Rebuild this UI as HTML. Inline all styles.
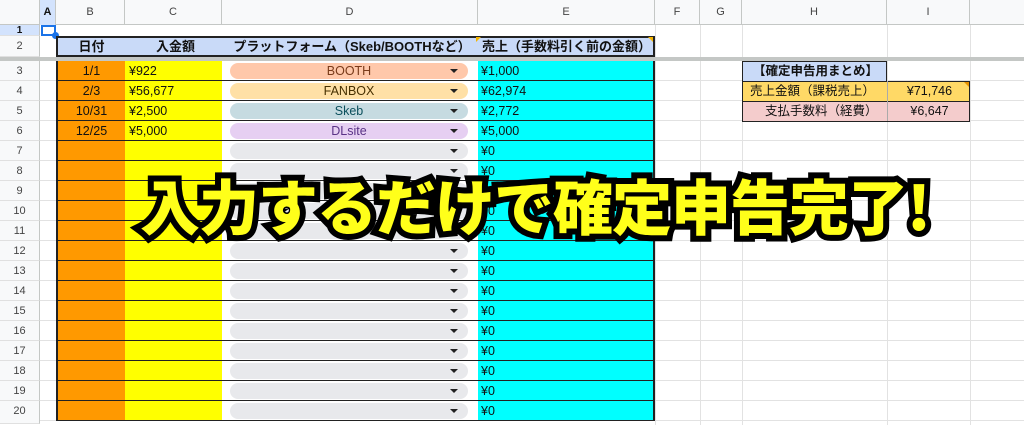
<!DOCTYPE html><html><head><meta charset="utf-8"><style>
*{margin:0;padding:0;box-sizing:border-box}
body{width:1024px;height:424px;overflow:hidden;background:#fff;font-family:"Liberation Sans","Noto Sans CJK JP",sans-serif;font-size:12.5px;color:#111;position:relative}
.a{position:absolute}
.hdr{top:0;height:25px;background:#f8f9fa;border-bottom:1px solid #c4c7c5;left:0;width:1024px}
.ch{position:absolute;top:0;height:25px;line-height:25px;text-align:center;color:#444;font-size:11px;border-right:1px solid #c4c7c5}
.rh{position:absolute;left:0;width:40px;background:#f8f9fa;border-right:1px solid #c4c7c5;border-bottom:1px solid #e0e0e0;text-align:center;color:#444;font-size:11px}
.r{position:absolute;left:40px;width:984px;height:20px;border-bottom:1px solid #e2e2e2}
.c{position:absolute;top:0;height:20px;line-height:21px}
.B{left:16px;width:69px;background:#ff9900;text-align:center;border-left:2px solid #222}
.C{left:85px;width:97px;background:#ffff00;padding-left:4px}
.D{left:182px;width:256px}
.E{left:438px;width:177px;background:#00ffff;padding-left:3px;border-right:2px solid #222}
.ln{position:absolute;left:16px;width:599px;height:1px;background:#222;top:19px}
.p{position:absolute;left:8px;top:2px;width:238px;height:16px;border-radius:8px;background:#e8e9ec;text-align:center;line-height:17px;font-size:12.5px}
.p:after{content:"";position:absolute;right:10px;top:6px;border-left:4px solid transparent;border-right:4px solid transparent;border-top:4px solid #222}
.vl{position:absolute;top:25px;width:1px;height:400px;background:#e2e2e2}
.big{position:absolute;left:140px;top:172px;font-size:60px;font-weight:900;color:#ffff1a;white-space:nowrap;letter-spacing:-1px;font-family:"Noto Sans CJK JP",sans-serif;-webkit-text-stroke:12px #000;paint-order:stroke fill;line-height:1.1}
</style></head><body>
<div class="a hdr"></div>
<div class="ch" style="left:0;width:40px"></div>
<div class="ch" style="left:40px;width:16px;background:#d3e3fd;font-weight:bold;color:#111">A</div>
<div class="ch" style="left:56px;width:69px">B</div>
<div class="ch" style="left:125px;width:97px">C</div>
<div class="ch" style="left:222px;width:256px">D</div>
<div class="ch" style="left:478px;width:177px">E</div>
<div class="ch" style="left:655px;width:45px">F</div>
<div class="ch" style="left:700px;width:42px">G</div>
<div class="ch" style="left:742px;width:145px">H</div>
<div class="ch" style="left:887px;width:83px">I</div>
<div class="vl" style="left:655px"></div><div class="vl" style="left:700px"></div><div class="vl" style="left:742px"></div><div class="vl" style="left:887px"></div><div class="vl" style="left:970px"></div>
<div class="rh" style="top:25px;height:11px;line-height:11px;background:#d3e3fd;font-weight:bold;color:#111;font-size:10px">1</div>
<div class="rh" style="top:36px;height:21px;line-height:21px">2</div>
<div class="a" style="left:41px;top:25px;width:15px;height:11px;border:2px solid #1a73e8"></div>
<div class="a" style="left:52px;top:32px;width:7px;height:7px;border-radius:50%;background:#1a73e8"></div>
<div class="a" style="left:56px;top:36px;width:599px;height:21px;background:#c9daf8;border:2px solid #222;font-weight:bold;font-size:13px;line-height:18px">
<span class="a" style="left:0;width:67px;text-align:center">日付</span>
<span class="a" style="left:69px;width:97px;text-align:center">入金額</span>
<span class="a" style="left:166px;width:256px;text-align:center">プラットフォーム（Skeb/BOOTHなど）</span>
<span class="a" style="left:424px">売上（手数料引く前の金額）</span>
<span class="a" style="left:418px;top:-1px;border-top:5px solid #f4b400;border-right:5px solid transparent"></span>
<span class="a" style="right:0;top:-1px;border-top:5px solid #f4b400;border-left:5px solid transparent"></span>
</div>
<div class="a" style="left:0;top:57px;width:1024px;height:4px;background:#c4c7c5"></div>

<div class="rh" style="top:61px;height:20px;line-height:20px">3</div>
<div class="r" style="top:61px"><div class="c B">1/1</div><div class="c C">¥922</div><div class="c D"><div class="p" style="background:#ffc8aa;color:#7a3b1a">BOOTH</div></div><div class="c E">¥1,000</div><div class="ln"></div></div>
<div class="rh" style="top:81px;height:20px;line-height:20px">4</div>
<div class="r" style="top:81px"><div class="c B">2/3</div><div class="c C">¥56,677</div><div class="c D"><div class="p" style="background:#ffe0a6;color:#473000">FANBOX</div></div><div class="c E">¥62,974</div><div class="ln"></div></div>
<div class="rh" style="top:101px;height:20px;line-height:20px">5</div>
<div class="r" style="top:101px"><div class="c B">10/31</div><div class="c C">¥2,500</div><div class="c D"><div class="p" style="background:#c6dbe1;color:#0b4f5c">Skeb</div></div><div class="c E">¥2,772</div><div class="ln"></div></div>
<div class="rh" style="top:121px;height:20px;line-height:20px">6</div>
<div class="r" style="top:121px"><div class="c B">12/25</div><div class="c C">¥5,000</div><div class="c D"><div class="p" style="background:#e6cff2;color:#5a3286">DLsite</div></div><div class="c E">¥5,000</div><div class="ln"></div></div>

<div class="rh" style="top:141px;height:20px;line-height:20px">7</div><div class="r" style="top:141px"><div class="c B"></div><div class="c C"></div><div class="c D"><div class="p"></div></div><div class="c E">¥0</div><div class="ln"></div></div>
<div class="rh" style="top:161px;height:20px;line-height:20px">8</div><div class="r" style="top:161px"><div class="c B"></div><div class="c C"></div><div class="c D"><div class="p"></div></div><div class="c E">¥0</div><div class="ln"></div></div>
<div class="rh" style="top:181px;height:20px;line-height:20px">9</div><div class="r" style="top:181px"><div class="c B"></div><div class="c C"></div><div class="c D"><div class="p"></div></div><div class="c E">¥0</div><div class="ln"></div></div>
<div class="rh" style="top:201px;height:20px;line-height:20px">10</div><div class="r" style="top:201px"><div class="c B"></div><div class="c C"></div><div class="c D"><div class="p"></div></div><div class="c E">¥0</div><div class="ln"></div></div>
<div class="rh" style="top:221px;height:20px;line-height:20px">11</div><div class="r" style="top:221px"><div class="c B"></div><div class="c C"></div><div class="c D"><div class="p"></div></div><div class="c E">¥0</div><div class="ln"></div></div>
<div class="rh" style="top:241px;height:20px;line-height:20px">12</div><div class="r" style="top:241px"><div class="c B"></div><div class="c C"></div><div class="c D"><div class="p"></div></div><div class="c E">¥0</div><div class="ln"></div></div>
<div class="rh" style="top:261px;height:20px;line-height:20px">13</div><div class="r" style="top:261px"><div class="c B"></div><div class="c C"></div><div class="c D"><div class="p"></div></div><div class="c E">¥0</div><div class="ln"></div></div>
<div class="rh" style="top:281px;height:20px;line-height:20px">14</div><div class="r" style="top:281px"><div class="c B"></div><div class="c C"></div><div class="c D"><div class="p"></div></div><div class="c E">¥0</div><div class="ln"></div></div>
<div class="rh" style="top:301px;height:20px;line-height:20px">15</div><div class="r" style="top:301px"><div class="c B"></div><div class="c C"></div><div class="c D"><div class="p"></div></div><div class="c E">¥0</div><div class="ln"></div></div>
<div class="rh" style="top:321px;height:20px;line-height:20px">16</div><div class="r" style="top:321px"><div class="c B"></div><div class="c C"></div><div class="c D"><div class="p"></div></div><div class="c E">¥0</div><div class="ln"></div></div>
<div class="rh" style="top:341px;height:20px;line-height:20px">17</div><div class="r" style="top:341px"><div class="c B"></div><div class="c C"></div><div class="c D"><div class="p"></div></div><div class="c E">¥0</div><div class="ln"></div></div>
<div class="rh" style="top:361px;height:20px;line-height:20px">18</div><div class="r" style="top:361px"><div class="c B"></div><div class="c C"></div><div class="c D"><div class="p"></div></div><div class="c E">¥0</div><div class="ln"></div></div>
<div class="rh" style="top:381px;height:20px;line-height:20px">19</div><div class="r" style="top:381px"><div class="c B"></div><div class="c C"></div><div class="c D"><div class="p"></div></div><div class="c E">¥0</div><div class="ln"></div></div>
<div class="rh" style="top:401px;height:23px;line-height:20px">20</div><div class="r" style="top:401px"><div class="c B"></div><div class="c C"></div><div class="c D"><div class="p"></div></div><div class="c E">¥0</div><div class="ln"></div></div>

<div class="a" style="left:742px;top:61px;width:145px;height:21px;background:#c9daf8;border:1px solid #222;font-weight:bold;line-height:19px;padding-left:10px">【確定申告用まとめ】</div>
<div class="a" style="left:742px;top:81px;width:228px;height:21px;background:#ffd966;border:1px solid #222;line-height:19px"><span class="a" style="left:7px">売上金額（課税売上）</span><span class="a" style="left:145px;width:83px;text-align:center">¥71,746</span><span class="a" style="right:0;top:0;border-top:5px solid #e69100;border-left:5px solid transparent"></span></div>
<div class="a" style="left:742px;top:101px;width:228px;height:21px;background:#f4cccc;border:1px solid #222;line-height:19px"><span class="a" style="left:22px">支払手数料（経費）</span><span class="a" style="left:145px;width:83px;text-align:center">¥6,647</span></div>
<div class="a" style="left:887px;top:81px;width:1px;height:40px;background:#aaa"></div>

<div class="big">入力するだけで確定申告完了!</div>
</body></html>
